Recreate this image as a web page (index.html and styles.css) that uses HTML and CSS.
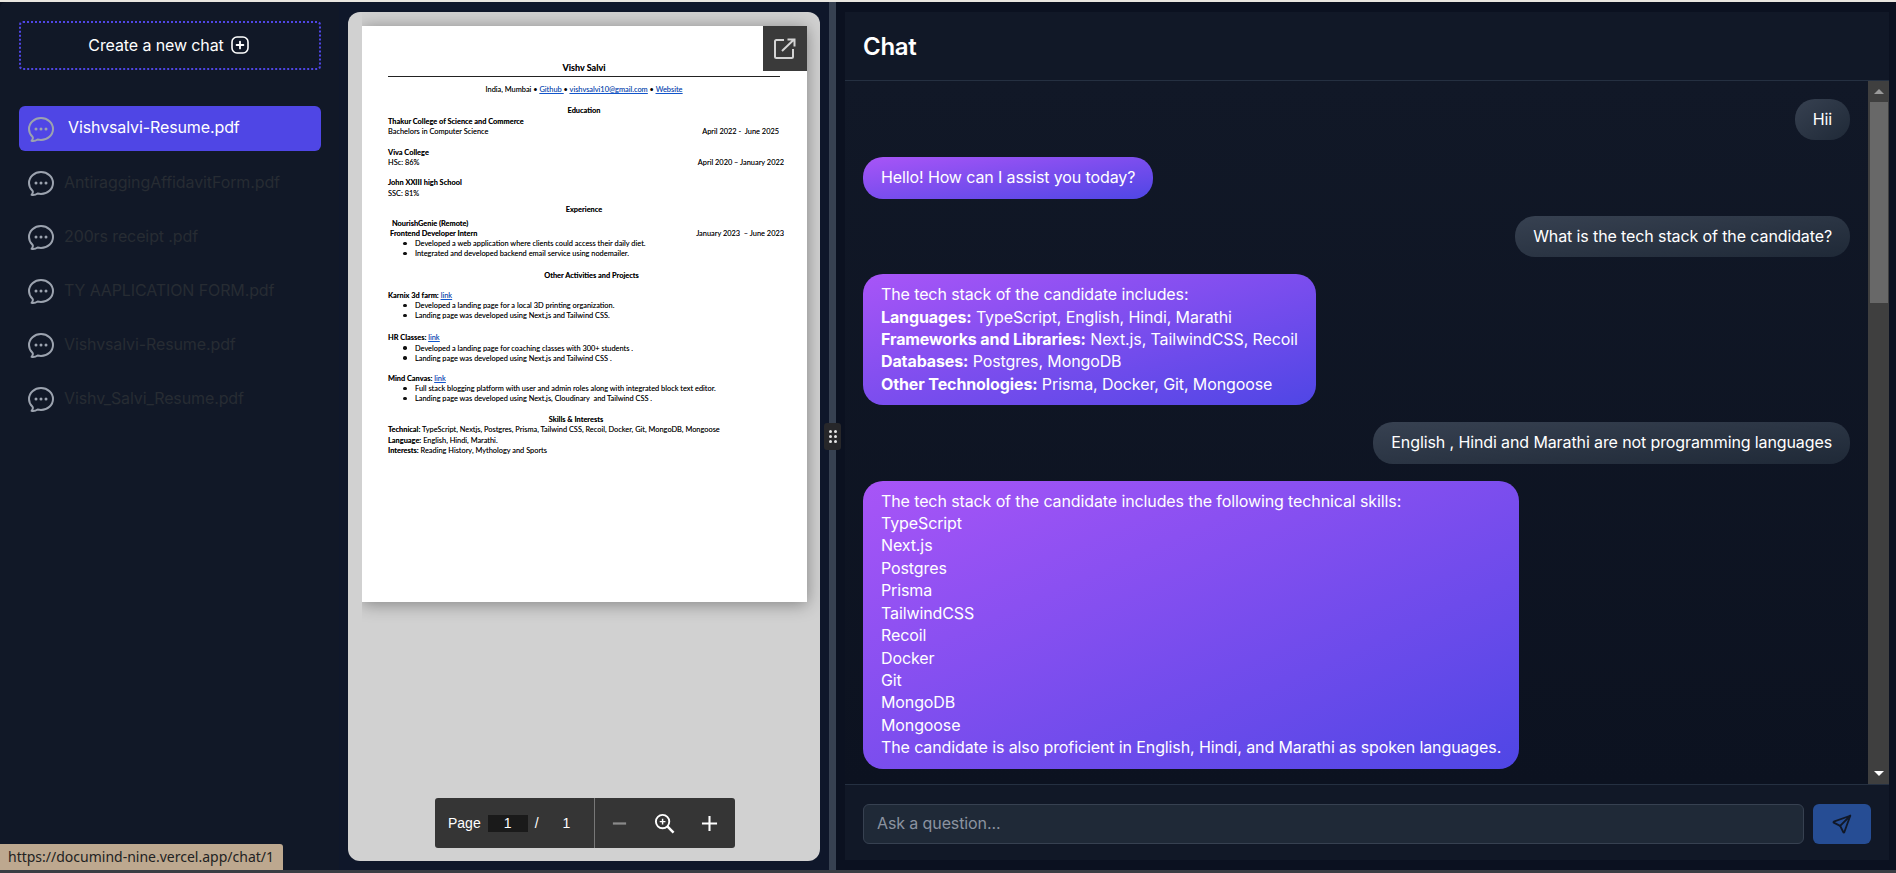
FILE: index.html
```html
<!DOCTYPE html>
<html>
<head>
  <title>Documind</title>
  <link rel="stylesheet" href="styles.css">
</head>
<body>
  <div class="top-strip"></div>
  <div class="app">
    <aside class="sidebar">
      <button class="new-chat">
        <span>Create a new chat</span>
        <svg class="plus-icon" viewBox="0 0 18 18" fill="none" stroke="#fff" stroke-width="1.6" stroke-linecap="round"><rect x="1" y="1" width="16" height="16" rx="5"/><path d="M9 5.6v6.8M5.6 9h6.8" stroke-width="1.8"/></svg>
      </button>
      <ul class="chat-list">
        <li class="chat-item active">
          <svg class="bubble-icon" viewBox="0 0 24 24"><path d="M8.625 12a.375.375 0 1 1-.75 0 .375.375 0 0 1 .75 0Zm0 0H8.25m4.125 0a.375.375 0 1 1-.75 0 .375.375 0 0 1 .75 0Zm0 0H12m4.125 0a.375.375 0 1 1-.75 0 .375.375 0 0 1 .75 0Zm0 0h-.375M21 12c0 4.556-4.03 8.25-9 8.25a9.764 9.764 0 0 1-2.555-.337A5.972 5.972 0 0 1 5.41 20.97a5.969 5.969 0 0 1-.474-.065 4.48 4.48 0 0 0 .978-2.025c.09-.457-.133-.901-.467-1.226C3.93 16.178 3 14.189 3 12c0-4.556 4.03-8.25 9-8.25s9 3.694 9 8.25Z"/></svg>
          <span>Vishvsalvi-Resume.pdf</span>
        </li>
        <li class="chat-item">
          <svg class="bubble-icon" viewBox="0 0 24 24"><path d="M8.625 12a.375.375 0 1 1-.75 0 .375.375 0 0 1 .75 0Zm0 0H8.25m4.125 0a.375.375 0 1 1-.75 0 .375.375 0 0 1 .75 0Zm0 0H12m4.125 0a.375.375 0 1 1-.75 0 .375.375 0 0 1 .75 0Zm0 0h-.375M21 12c0 4.556-4.03 8.25-9 8.25a9.764 9.764 0 0 1-2.555-.337A5.972 5.972 0 0 1 5.41 20.97a5.969 5.969 0 0 1-.474-.065 4.48 4.48 0 0 0 .978-2.025c.09-.457-.133-.901-.467-1.226C3.93 16.178 3 14.189 3 12c0-4.556 4.03-8.25 9-8.25s9 3.694 9 8.25Z"/></svg>
          <span>AntiraggingAffidavitForm.pdf</span>
        </li>
        <li class="chat-item">
          <svg class="bubble-icon" viewBox="0 0 24 24"><path d="M8.625 12a.375.375 0 1 1-.75 0 .375.375 0 0 1 .75 0Zm0 0H8.25m4.125 0a.375.375 0 1 1-.75 0 .375.375 0 0 1 .75 0Zm0 0H12m4.125 0a.375.375 0 1 1-.75 0 .375.375 0 0 1 .75 0Zm0 0h-.375M21 12c0 4.556-4.03 8.25-9 8.25a9.764 9.764 0 0 1-2.555-.337A5.972 5.972 0 0 1 5.41 20.97a5.969 5.969 0 0 1-.474-.065 4.48 4.48 0 0 0 .978-2.025c.09-.457-.133-.901-.467-1.226C3.93 16.178 3 14.189 3 12c0-4.556 4.03-8.25 9-8.25s9 3.694 9 8.25Z"/></svg>
          <span>200rs receipt .pdf</span>
        </li>
        <li class="chat-item">
          <svg class="bubble-icon" viewBox="0 0 24 24"><path d="M8.625 12a.375.375 0 1 1-.75 0 .375.375 0 0 1 .75 0Zm0 0H8.25m4.125 0a.375.375 0 1 1-.75 0 .375.375 0 0 1 .75 0Zm0 0H12m4.125 0a.375.375 0 1 1-.75 0 .375.375 0 0 1 .75 0Zm0 0h-.375M21 12c0 4.556-4.03 8.25-9 8.25a9.764 9.764 0 0 1-2.555-.337A5.972 5.972 0 0 1 5.41 20.97a5.969 5.969 0 0 1-.474-.065 4.48 4.48 0 0 0 .978-2.025c.09-.457-.133-.901-.467-1.226C3.93 16.178 3 14.189 3 12c0-4.556 4.03-8.25 9-8.25s9 3.694 9 8.25Z"/></svg>
          <span>TY AAPLICATION FORM.pdf</span>
        </li>
        <li class="chat-item">
          <svg class="bubble-icon" viewBox="0 0 24 24"><path d="M8.625 12a.375.375 0 1 1-.75 0 .375.375 0 0 1 .75 0Zm0 0H8.25m4.125 0a.375.375 0 1 1-.75 0 .375.375 0 0 1 .75 0Zm0 0H12m4.125 0a.375.375 0 1 1-.75 0 .375.375 0 0 1 .75 0Zm0 0h-.375M21 12c0 4.556-4.03 8.25-9 8.25a9.764 9.764 0 0 1-2.555-.337A5.972 5.972 0 0 1 5.41 20.97a5.969 5.969 0 0 1-.474-.065 4.48 4.48 0 0 0 .978-2.025c.09-.457-.133-.901-.467-1.226C3.93 16.178 3 14.189 3 12c0-4.556 4.03-8.25 9-8.25s9 3.694 9 8.25Z"/></svg>
          <span>Vishvsalvi-Resume.pdf</span>
        </li>
        <li class="chat-item">
          <svg class="bubble-icon" viewBox="0 0 24 24"><path d="M8.625 12a.375.375 0 1 1-.75 0 .375.375 0 0 1 .75 0Zm0 0H8.25m4.125 0a.375.375 0 1 1-.75 0 .375.375 0 0 1 .75 0Zm0 0H12m4.125 0a.375.375 0 1 1-.75 0 .375.375 0 0 1 .75 0Zm0 0h-.375M21 12c0 4.556-4.03 8.25-9 8.25a9.764 9.764 0 0 1-2.555-.337A5.972 5.972 0 0 1 5.41 20.97a5.969 5.969 0 0 1-.474-.065 4.48 4.48 0 0 0 .978-2.025c.09-.457-.133-.901-.467-1.226C3.93 16.178 3 14.189 3 12c0-4.556 4.03-8.25 9-8.25s9 3.694 9 8.25Z"/></svg>
          <span>Vishv_Salvi_Resume.pdf</span>
        </li>
      </ul>
    </aside>

    <section class="pdf-column">
      <div class="pdf-panel">
        <div class="pdf-scroll">
          <div class="pdf-page">
            <button class="open-btn">
              <svg viewBox="0 0 22 22" fill="none" stroke="#d4d4d4" stroke-width="2"><path d="M10 2H2.5A1.5 1.5 0 0 0 1 3.5v15A1.5 1.5 0 0 0 2.5 20h15a1.5 1.5 0 0 0 1.5-1.5V11"/><path d="M8 13 20 1.5M13.5 1.5H20.5V8.5"/></svg>
            </button>
            <div class="ln center name">Vishv Salvi</div>
            <div class="rule"></div>
            <div class="ln center">India, Mumbai • <a>Github </a>• <a>vishvsalvi10@gmail.com</a> • <a>Website</a></div>

            <div class="ln center mt-11"><b>Education</b></div>
            <div class="ln"><b>Thakur College of Science and Commerce</b></div>
            <div class="ln split date-a"><span>Bachelors in Computer Science</span><span>April 2022 -&nbsp; June 2025</span></div>
            <div class="ln mt-11"><b>Viva College</b></div>
            <div class="ln split"><span>HSc: 86%</span><span>April 2020 – January 2022</span></div>
            <div class="ln mt-10"><b>John XXIII high School</b></div>
            <div class="ln">SSC: 81%</div>

            <div class="ln center mt-6"><b>Experience</b></div>
            <div class="ln mt-4 ind-4"><b>NourishGenie (Remote)</b></div>
            <div class="ln split date-c ind-2"><b>Frontend Developer Intern</b><span>January 2023&nbsp; – June 2023</span></div>
            <ul class="bullets">
              <li>Developed a web application where clients could access their daily diet.</li>
              <li>Integrated and developed backend email service using nodemailer.</li>
            </ul>

            <div class="ln center mt-11 shift-r"><b>Other Activities and Projects</b></div>
            <div class="ln mt-10"><b>Karnix 3d farm:</b> <a>link</a></div>
            <ul class="bullets">
              <li>Developed a landing page for a local 3D printing organization.</li>
              <li>Landing page was developed using Next.js and Tailwind CSS.</li>
            </ul>
            <div class="ln mt-12"><b>HR Classes:</b> <a>link</a></div>
            <ul class="bullets">
              <li>Developed a landing page for coaching classes with 300+ students .</li>
              <li>Landing page was developed using Next.js and Tailwind CSS .</li>
            </ul>
            <div class="ln mt-10"><b>Mind Canvas:</b> <a>link</a></div>
            <ul class="bullets">
              <li>Full stack blogging platform with user and admin roles along with integrated block text editor.</li>
              <li>Landing page was developed using Next.js, Cloudinary&nbsp; and Tailwind CSS .</li>
            </ul>

            <div class="ln center mt-10 shift-l"><b>Skills &amp; Interests</b></div>
            <div class="ln"><b>Technical:</b> TypeScript, Nextjs, Postgres, Prisma, Tailwind CSS, Recoil, Docker, Git, MongoDB, Mongoose</div>
            <div class="ln mt-1"><b>Language:</b> English, Hindi, Marathi.</div>
            <div class="ln"><b>Interests:</b> Reading History, Mythology and Sports</div>
          </div>
        </div>

        <div class="pdf-toolbar">
          <div class="page-nav">
            <span>Page</span>
            <span class="page-input">1</span>
            <span class="slash">/</span>
            <span class="page-total">1</span>
          </div>
          <div class="zoom-tools">
            <svg class="tool-icon" viewBox="0 0 18 18"><path d="M2 9h14" stroke="#8a8a8a" stroke-width="2.4"/></svg>
            <svg class="tool-icon zoom-glass" viewBox="0 0 22 22" fill="none" stroke="#fff"><circle cx="9" cy="9" r="7" stroke-width="2"/><path d="M14 14l6.5 6.5" stroke-width="2.6"/><path d="M9 6v6M6 9h6" stroke-width="1.5"/></svg>
            <svg class="tool-icon" viewBox="0 0 18 18"><path d="M1 9h16M9 1v16" stroke="#fff" stroke-width="2.2"/></svg>
          </div>
        </div>
      </div>
    </section>

    <div class="splitter">
      <div class="split-handle">
        <i></i><i></i><i></i><i></i><i></i><i></i>
      </div>
    </div>

    <section class="chat-column">
      <div class="chat-panel">
        <header class="chat-header"><h1>Chat</h1></header>
        <div class="chat-body">
          <div class="messages">
            <div class="msg user">Hii</div>
            <div class="msg bot">Hello! How can I assist you today?</div>
            <div class="msg user">What is the tech stack of the candidate?</div>
            <div class="msg bot">The tech stack of the candidate includes:<br><b>Languages:</b> TypeScript, English, Hindi, Marathi<br><b>Frameworks and Libraries:</b> Next.js, TailwindCSS, Recoil<br><b>Databases:</b> Postgres, MongoDB<br><b>Other Technologies:</b> Prisma, Docker, Git, Mongoose</div>
            <div class="msg user">English , Hindi and Marathi are not programming languages</div>
            <div class="msg bot">The tech stack of the candidate includes the following technical skills:<br>TypeScript<br>Next.js<br>Postgres<br>Prisma<br>TailwindCSS<br>Recoil<br>Docker<br>Git<br>MongoDB<br>Mongoose<br>The candidate is also proficient in English, Hindi, and Marathi as spoken languages.</div>
          </div>
          <div class="scrollbar">
            <div class="arrow up"></div>
            <div class="thumb"></div>
            <div class="arrow down"></div>
          </div>
        </div>
        <form class="chat-form">
          <input class="chat-input" type="text" placeholder="Ask a question...">
          <button class="send-btn" type="button">
            <svg viewBox="0 0 24 24" fill="none" stroke="#111827" stroke-width="2" stroke-linecap="round" stroke-linejoin="round"><path d="M10 14 21 3"/><path d="M21 3l-6.5 18a.55.55 0 0 1-1 0L10 14l-7-3.5a.55.55 0 0 1 0-1L21 3"/></svg>
          </button>
        </form>
      </div>
    </section>
  </div>
  <div class="bottom-strip"></div>
  <div class="status-tip">https://documind-nine.vercel.app/chat/1</div>
</body>
</html>
```

FILE: styles.css
```css
* {
  box-sizing: border-box;
}

html, body {
  margin: 0;
  height: 100%;
  overflow: hidden;
}

body {
  display: flex;
  flex-direction: column;
  background-color: #0b1120;
  font-family: Inter, sans-serif;
  font-size: 16px;
  letter-spacing: -0.11px;
  color: #fff;
}

.top-strip {
  height: 2px;
  background-color: #e9e6e0;
}

.bottom-strip {
  height: 3px;
  background-color: #3a3d44;
}

.app {
  flex: 1;
  display: flex;
  min-height: 0;
}

/* sidebar */
.sidebar {
  width: 339px;
  padding: 19px 18px 0 19px;
  background-color: #111827;
  border-top-left-radius: 6px;
}

.new-chat {
  display: flex;
  align-items: center;
  justify-content: center;
  gap: 7px;
  width: 302px;
  height: 49px;
  padding: 0 3px 2px 0;
  background: none;
  border: 2px dotted #4f46e5;
  border-radius: 4px;
  color: #fff;
  font-family: inherit;
  font-size: 16px;
  letter-spacing: inherit;
}

.plus-icon {
  width: 18px;
  height: 18px;
}

.chat-list {
  list-style: none;
  margin: 36px 0 0;
  padding: 0;
}

.chat-item {
  display: flex;
  align-items: center;
  width: 302px;
  height: 45px;
  margin-bottom: 9px;
  padding-left: 6px;
  border-radius: 6px;
  color: #272c33;
}

.chat-item span {
  margin-left: 7px;
  margin-top: -2px;
}

.chat-item.active {
  background-color: #4f46e5;
  color: #fff;
}

.chat-item.active span {
  margin-left: 11px;
  margin-top: -3px;
}

.bubble-icon {
  width: 32px;
  height: 32px;
  fill: none;
  stroke: #9ca3af;
  stroke-width: 1.5;
  stroke-linecap: round;
  stroke-linejoin: round;
}

/* pdf viewer */
.pdf-column {
  width: 490px;
  padding: 10px 9px 9px;
  background-color: #0f172a;
}

.pdf-panel {
  position: relative;
  display: flex;
  width: 472px;
  height: 849px;
  background-color: #d1d1d1;
  border-radius: 12px;
  overflow: hidden;
}

.pdf-scroll {
  flex: 1;
  margin-left: 14px;
  padding: 14px 13px 0 0;
  overflow: hidden;
}

.pdf-page {
  position: relative;
  width: 445px;
  height: 576px;
  padding: 37px 0 0 26px;
  background-color: #fff;
  box-shadow: 0 2px 16px rgba(0, 0, 0, 0.38);
  font-family: Lato, sans-serif;
  font-size: 7.4px;
  letter-spacing: 0;
  color: #000;
  text-shadow: 0 0 0.5px rgba(0, 0, 0, 0.45);
}

.ln {
  height: 10.2px;
  line-height: 10.2px;
  width: 393px;
  white-space: nowrap;
}

.ln a, .bullets a {
  color: #1155cc;
  text-decoration: underline;
}

.center {
  text-align: center;
  width: 392px;
}

.name {
  font-size: 9px;
  font-weight: 700;
}

.rule {
  width: 392px;
  height: 1px;
  margin: 3px 0 8px;
  background-color: #222;
}

.split {
  display: flex;
  justify-content: space-between;
  width: 396px;
}

.date-a {
  width: 391px;
}

.date-c {
  width: 394px;
}

.ind-2 {
  margin-left: 2px;
}

.ind-4 {
  margin-left: 4px;
}

.shift-r {
  padding-left: 15px;
}

.shift-l {
  padding-right: 16px;
}

.mt-1 { margin-top: 1px; }
.mt-4 { margin-top: 4px; }
.mt-6 { margin-top: 6px; }
.mt-10 { margin-top: 10px; }
.mt-11 { margin-top: 11px; }
.mt-12 { margin-top: 12px; }

.bullets {
  list-style: none;
  margin: 0;
  padding: 0 0 0 27px;
}

.bullets li {
  height: 10.2px;
  line-height: 10.2px;
  white-space: nowrap;
}

.bullets li::before {
  content: "";
  display: inline-block;
  width: 3.5px;
  height: 3.5px;
  margin: 0 8.5px 1px -12px;
  border-radius: 50%;
  background-color: #111;
}

.open-btn {
  position: absolute;
  top: 0;
  right: 0;
  display: flex;
  align-items: center;
  justify-content: center;
  width: 44px;
  height: 45px;
  padding: 0;
  background-color: #3a3a3a;
  border: none;
}

.open-btn svg {
  width: 22px;
  height: 22px;
}

.pdf-toolbar {
  position: absolute;
  left: 87px;
  bottom: 13px;
  display: flex;
  width: 300px;
  height: 50px;
  background-color: #353535;
  border-radius: 3px;
  font-family: "Liberation Sans", sans-serif;
  font-size: 14px;
  letter-spacing: 0;
}

.page-nav {
  display: flex;
  align-items: center;
  width: 160px;
  padding-left: 13px;
  border-right: 1px solid #777;
}

.page-input {
  width: 40px;
  height: 17px;
  margin-left: 7px;
  background-color: #1a1a1a;
  line-height: 17px;
  text-align: center;
}

.slash {
  margin-left: 7px;
}

.page-total {
  margin-left: 24px;
}

.zoom-tools {
  display: flex;
  align-items: center;
  gap: 26px;
  padding-left: 16px;
}

.tool-icon {
  width: 17px;
  height: 17px;
}

.zoom-glass {
  width: 21px;
  height: 21px;
}

/* drag bar between the panes */
.splitter {
  position: relative;
  width: 7px;
  background-color: #374151;
  margin-top: 0;
}

.split-handle {
  position: absolute;
  top: 421px;
  left: -5px;
  display: grid;
  grid-template-columns: 3px 3px;
  grid-auto-rows: 3px;
  gap: 2px 2px;
  align-content: center;
  justify-content: center;
  width: 17px;
  height: 27px;
  background-color: #27272a;
  border-radius: 3px;
}

.split-handle i {
  background-color: #e4e4e4;
  border-radius: 50%;
}

/* chat */
.chat-column {
  flex: 1;
  display: flex;
  min-width: 0;
  padding: 10px 7px 10px 9px;
  background-color: #0b1120;
}

.chat-panel {
  flex: 1;
  display: flex;
  flex-direction: column;
  min-width: 0;
  background-color: #111827;
}

.chat-header {
  height: 69px;
  padding-left: 18px;
  border-bottom: 1px solid #253041;
}

.chat-header h1 {
  margin: 0;
  font-size: 24px;
  font-weight: 600;
  letter-spacing: -0.3px;
  line-height: 69px;
}

.chat-body {
  flex: 1;
  display: flex;
  min-height: 0;
  background: linear-gradient(#111827, #0c1220);
}

.messages {
  flex: 1;
  display: flex;
  flex-direction: column;
  align-items: flex-start;
  gap: 17px;
  min-width: 0;
  padding: 18px 18px 0;
  overflow: hidden;
}

.msg {
  flex: none;
  padding: 9px 18px 10px;
  border-radius: 20px;
  line-height: 22.4px;
}

.msg b {
  font-weight: 700;
}

.msg.user {
  align-self: flex-end;
  background: linear-gradient(to bottom right, #374151, #1f2937);
}

.msg.bot {
  background: linear-gradient(to bottom right, #a855f7, #4f46e5);
}

.scrollbar {
  display: flex;
  flex-direction: column;
  align-items: center;
  width: 21px;
  background-color: #3f3f3f;
}

.arrow {
  flex: none;
  width: 0;
  height: 0;
  margin: 8px 0;
  border-left: 5px solid transparent;
  border-right: 5px solid transparent;
}

.arrow.up {
  border-bottom: 5px solid #9a9a9a;
}

.arrow.down {
  margin-top: auto;
  border-top: 5px solid #fff;
}

.thumb {
  flex: none;
  width: 18px;
  height: 201px;
  background-color: #686868;
}

.chat-form {
  display: flex;
  gap: 9px;
  height: 76px;
  padding: 19px 18px 0;
  border-top: 1px solid #253041;
  margin: 0;
}

.chat-input {
  flex: 1;
  height: 40px;
  padding: 0 13px 2px;
  background-color: #1f2937;
  border: 1px solid #374151;
  border-radius: 6px;
  color: #fff;
  font-family: inherit;
  font-size: 16px;
  letter-spacing: inherit;
}

.chat-input::placeholder {
  color: #8b93a0;
}

.send-btn {
  display: flex;
  align-items: center;
  justify-content: center;
  width: 58px;
  height: 40px;
  padding: 0;
  background-color: #264d94;
  border: none;
  border-radius: 6px;
}

.send-btn svg {
  width: 22px;
  height: 22px;
}

.status-tip {
  position: fixed;
  left: 0;
  bottom: 3px;
  width: 283px;
  height: 26px;
  padding-left: 8px;
  background-color: #bda88f;
  border-top-right-radius: 3px;
  color: #222;
  font-family: "Noto Sans", sans-serif;
  font-size: 14px;
  letter-spacing: 0;
  line-height: 26px;
  white-space: nowrap;
}
```
